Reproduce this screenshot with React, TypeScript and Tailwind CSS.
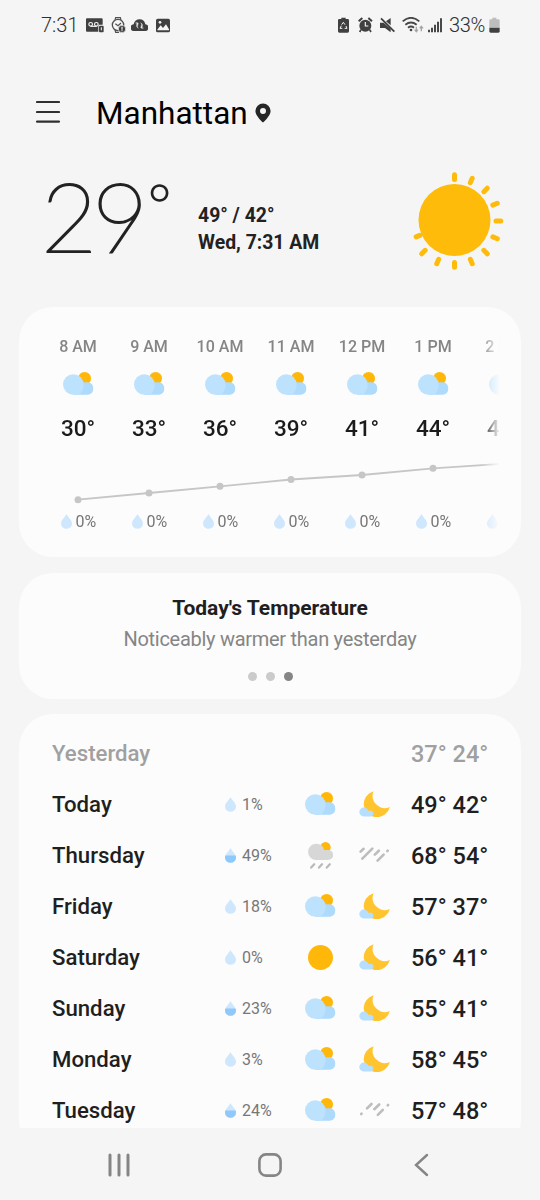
import { ReactNode } from "react";

type DayIcon = "partly" | "rain" | "sun";
type NightIcon = "moon" | "showers" | "drizzle";

interface Hour {
    time: string;
    temp: number;
    y: number;
}

interface Day {
    name: string;
    chance: number;
    day: DayIcon;
    night: NightIcon;
    high: number;
    low: number;
}

// y is the height of the point inside the trend chart
const hours: Hour[] = [
    { time: "8 AM", temp: 30, y: 45.7 },
    { time: "9 AM", temp: 33, y: 39 },
    { time: "10 AM", temp: 36, y: 32.3 },
    { time: "11 AM", temp: 39, y: 25.5 },
    { time: "12 PM", temp: 41, y: 21 },
    { time: "1 PM", temp: 44, y: 14.3 },
    { time: "2 PM", temp: 46, y: 9.7 },
];

const days: Day[] = [
    { name: "Today", chance: 1, day: "partly", night: "moon", high: 49, low: 42 },
    { name: "Thursday", chance: 49, day: "rain", night: "showers", high: 68, low: 54 },
    { name: "Friday", chance: 18, day: "partly", night: "moon", high: 57, low: 37 },
    { name: "Saturday", chance: 0, day: "sun", night: "moon", high: 56, low: 41 },
    { name: "Sunday", chance: 23, day: "partly", night: "moon", high: 55, low: 41 },
    { name: "Monday", chance: 3, day: "partly", night: "moon", high: 58, low: 45 },
    { name: "Tuesday", chance: 24, day: "partly", night: "drizzle", high: 57, low: 48 },
];

const PartlyCloudy = () => (
    <svg className="w-[31px] h-6" viewBox="0 0 31 24">
        <circle cx="21.6" cy="6.4" r="6.4" fill="#ffb80a" />
        <path d="M19 10.2h6a6.4 6.4 0 0 1 0 12.6H10z" fill="#aedafc" />
        <path d="M10.3 2.2a10.3 10.3 0 0 0 0 20.6h5.2c3-1.6 5.1-5.8 5.1-10.3A10.3 10.3 0 0 0 10.3 2.2z" fill="#bde2fe" />
    </svg>
);

const RainyDay = () => (
    <svg className="w-[25px] h-[27px]" viewBox="0 0 25 27">
        <circle cx="17.5" cy="5.2" r="5.2" fill="#ffb80a" />
        <path d="M8.3 1.7a8.2 8.2 0 0 1 7.8 6.2h4a5.1 5.1 0 0 1 0 10.2H8.3a8.2 8.2 0 0 1 0-16.4z" fill="#d7d7d7" />
        <path d="M6.2 22.2l-3 3.4M14 22.2l-3 3.4M21.8 22.2l-3 3.4" stroke="#b9b9b9" strokeWidth="2.2" strokeLinecap="round" />
    </svg>
);

const SunSmall = () => (
    <svg className="w-[25px] h-[25px]" viewBox="0 0 25 25">
        <circle cx="12.5" cy="12.5" r="12.5" fill="#ffb80a" />
    </svg>
);

const Moon = () => (
    <svg className="w-[31px] h-[26px]" viewBox="0 0 31 26">
        <path d="M14.6.2A13.2 13.2 0 1 0 30.8 16 12.2 12.2 0 0 1 14.6.2z" fill="#ffc42e" />
        <path d="M4.7 16.6c2.4 0 4.1 1.4 4.6 3.2h3a2.9 2.9 0 0 1 0 5.6H4.7a4.4 4.4 0 0 1 0-8.8z" fill="#b5deff" />
    </svg>
);

const Showers = () => (
    <svg className="w-[31px] h-4" viewBox="0 0 31 16">
        <path d="M1.6 4.6l3-2.8M3.3 11.6l10-10M15.8 7.6l4-3.9M18.6 13.6l6-6M28.3 4.1l.4-.4" stroke="#bdbdbd" strokeWidth="2.6" strokeLinecap="round" />
    </svg>
);

const Drizzle = () => (
    <svg className="w-[31px] h-4" viewBox="0 0 31 16">
        <path d="M2.2 12l.4-.4M8 6.4l4.5-4.4M15.3 7.2l4.9-4.7M18.8 12.8l5-5M28.7 3.4l.4-.4" stroke="#bdbdbd" strokeWidth="2.6" strokeLinecap="round" />
    </svg>
);

const Drop = ({ half = false }: { half?: boolean }) => (
    <svg className="w-[11px] h-[15px]" viewBox="0 0 11 15">
        <path d="M5.5 0C7 3 11 6.3 11 9.4a5.5 5.3 0 0 1-11 0C0 6.3 4 3 5.5 0z" fill="#cfe7fc" />
        {half && <path d="M.4 7.5h10.2c.3.6.4 1.3.4 1.9a5.5 5.3 0 0 1-11 0c0-.6.1-1.3.4-1.9z" fill="#8fc8fa" />}
    </svg>
);

const dayIcons: Record<DayIcon, ReactNode> = {
    partly: <PartlyCloudy />,
    rain: <RainyDay />,
    sun: <SunSmall />,
};

const nightIcons: Record<NightIcon, ReactNode> = {
    moon: <Moon />,
    showers: <Showers />,
    drizzle: <Drizzle />,
};

const StatusBar = () => (
    <div className="flex h-[50px] items-center pl-[41px] pr-10 text-xl font-light text-[#303030]">
        <span className="w-[45px]">7:31</span>
        <svg className="w-[18px] h-4" viewBox="0 0 54 48" fill="#404040">
            <path d="M3 4h44a3 3 0 0 1 3 3v16h-9a4 4 0 0 0-4 4v17H3a3 3 0 0 1-3-3V7a3 3 0 0 1 3-3z" />
            <path d="M14 28h18" stroke="#f5f5f5" strokeWidth="3.5" />
            <circle cx="14" cy="22" r="5.5" fill="none" stroke="#f5f5f5" strokeWidth="3.5" />
            <circle cx="31" cy="22" r="5.5" fill="none" stroke="#f5f5f5" strokeWidth="3.5" />
            <rect x="39" y="26" width="14" height="20" rx="3" />
            <path d="M46 31v9" stroke="#f5f5f5" strokeWidth="3" />
        </svg>
        <svg className="ml-[7px] w-[15px] h-4" viewBox="0 0 45 48" fill="none" stroke="#505050">
            <path d="M12 9l2-7h14l2 7M12 39l2 7h10" strokeWidth="3.5" />
            <circle cx="21" cy="24" r="17" strokeWidth="4" />
            <path d="M13 20l8 6 9-8" strokeWidth="3.5" />
            <circle cx="33" cy="36" r="11" fill="#404040" stroke="#f5f5f5" strokeWidth="2" />
            <path d="M33 29v9M33 40v3" stroke="#f5f5f5" strokeWidth="3.5" />
        </svg>
        <svg className="ml-[5px] w-[17px] h-4" viewBox="0 0 51 48">
            <path d="M10 42a10 10 0 0 1-2-20C10 12 17 7 26 7s15 5 17 15a10 10 0 0 1-2 20z" fill="#404040" />
            <path d="M22 33a8 8 0 0 1-1-14M20 26v-8h-6M29 18a8 8 0 0 1 1 14M31 25v8h6" fill="none" stroke="#f5f5f5" strokeWidth="3" />
        </svg>
        <svg className="ml-2 w-[14px] h-4" viewBox="0 0 42 48">
            <rect y="5" width="42" height="41" rx="5" fill="#404040" />
            <path d="M4 38l10-13 7 8 9-11 9 15v3H4z" fill="#f5f5f5" />
            <circle cx="12" cy="16" r="4" fill="#f5f5f5" />
        </svg>

        <svg className="ml-auto w-[11px] h-4" viewBox="0 0 33 48">
            <path d="M10 2h13v4h6a4 4 0 0 1 4 4v33a4 4 0 0 1-4 4H4a4 4 0 0 1-4-4V10a4 4 0 0 1 4-4h6z" fill="#404040" />
            <path d="M11 23l5-7 5 7M24 27l3 7h-7M13 34H6l4-8" fill="none" stroke="#f5f5f5" strokeWidth="3" />
        </svg>
        <svg className="ml-[9px] w-[15px] h-4" viewBox="0 0 45 48">
            <circle cx="22" cy="26" r="18" fill="#404040" />
            <path d="M2 13L13 3M42 13L31 3" stroke="#404040" strokeWidth="6" />
            <path d="M9 38l-4 7M35 38l4 7" stroke="#404040" strokeWidth="5" />
            <path d="M22 15v12h9" fill="none" stroke="#f5f5f5" strokeWidth="3.5" />
        </svg>
        <svg className="ml-[7px] w-[15px] h-4" viewBox="0 0 45 48">
            <path d="M0 17h11l21 19v10L15 33H0zM18 13l14-10v22z" fill="#404040" />
            <path d="M3 4l40 40" stroke="#404040" strokeWidth="5.5" />
        </svg>
        <svg className="ml-[7px] w-[22px] h-4" viewBox="0 0 66 48" fill="none">
            <path d="M2 13q25-21 50 0M10 23q17-13 34 0M18 32q9-7 18 0" stroke="#484848" strokeWidth="5.5" />
            <circle cx="27" cy="39" r="4" fill="#404040" />
            <path d="M43 29v14M38 38l5 6 5-6M58 43V29M53 34l5-6 5 6" stroke="#a5a5a5" strokeWidth="4" />
        </svg>
        <svg className="ml-1 w-[15px] h-4" viewBox="0 0 45 48">
            <path d="M3 38v8M12 32v14M21 23v23M30 14v32M39 4v42" stroke="#484848" strokeWidth="6" />
        </svg>
        <span className="ml-1.5 w-[40px] tracking-[-0.3px]">33%</span>
        <svg className="w-[11px] h-4" viewBox="0 0 33 48">
            <path d="M10 2h12v5h6a4 4 0 0 1 4 4v21H1V11a4 4 0 0 1 4-4h5z" fill="#bdbdbd" />
            <path d="M1 32h31v11a4 4 0 0 1-4 4H5a4 4 0 0 1-4-4z" fill="#404040" />
        </svg>
    </div>
);

// Twelve rays, the upper left part of the circle has none
const rays = [0, 22.5, 45, 67.5, 90, 112.5, 135, 157.5, 180, 202.5, 225, 247.5];

const BigSun = () => (
    <svg className="w-[108px] h-[108px]" viewBox="0 0 108 108">
        <circle cx="54.5" cy="54" r="36" fill="#ffbb0a" />
        {rays.map((angle) => (
            <path
                key={angle}
                d={angle === 247.5 ? "M54.5 17.5v-4" : "M54.5 13.5v-4.8"}
                transform={`rotate(${angle} 54.5 55)`}
                stroke="#ffbb0a"
                strokeWidth="5"
                strokeLinecap="round"
            />
        ))}
    </svg>
);

const HourlyCard = () => {
    const points = hours.map((hour, i) => `${35 + i * 71},${hour.y}`).join(" ");

    return (
        <section className="mx-[19px] h-[250px] rounded-[34px] bg-[#fcfcfc] pl-[23.5px] pt-[26px]">
            <div className="w-[458px] overflow-hidden [mask-image:linear-gradient(to_right,black_438px,transparent_457px)]">
                <div className="flex w-[497px]">
                    {hours.map((hour) => (
                        <div key={hour.time} className="flex w-[71px] flex-col items-center">
                            <span className="h-[26px] pt-px text-base font-medium leading-[26px] text-[#858585]">{hour.time}</span>
                            <div className="mt-[13px]"><PartlyCloudy /></div>
                            <span className="mt-4 h-[33px] text-[22.5px] font-medium leading-8 text-[#1b1b1b]">{hour.temp}°</span>
                        </div>
                    ))}
                </div>
                <svg className="mt-[9px] h-[52px] w-[497px]" viewBox="0 0 497 52">
                    <polyline points={points} fill="none" stroke="#c6c6c6" strokeWidth="1.8" />
                    {hours.map((hour, i) => (
                        <circle key={hour.time} cx={35 + i * 71} cy={hour.y} r="3.5" fill="#c6c6c6" />
                    ))}
                </svg>
                <div className="mt-[3px] flex w-[497px]">
                    {hours.map((hour) => (
                        <div key={hour.time} className="flex h-6 w-[71px] items-center gap-1 pl-[18px] text-base text-[#777]">
                            <Drop />
                            <span className="pt-0.5">0%</span>
                        </div>
                    ))}
                </div>
            </div>
        </section>
    );
};

const DailyRow = ({ item }: { item: Day }) => (
    <div className="flex h-[51px] items-center">
        <span className="w-[172.5px] pt-0.5 text-[22.2px] font-medium text-[#1f1f1f]">{item.name}</span>
        <Drop half={item.chance > 20} />
        <span className="ml-[6.5px] w-[63px] pt-0.5 text-base text-[#777]">{item.chance}%</span>
        <div className="flex w-[31px] justify-center">{dayIcons[item.day]}</div>
        <div className="ml-[23px] flex w-[31px] justify-center">{nightIcons[item.night]}</div>
        <span className="ml-[21px] whitespace-nowrap pt-[3px] text-[23.5px] font-medium text-[#1f1f1f]">{item.high}° {item.low}°</span>
    </div>
);

const App = () => (
    <div className="flex h-[1200px] w-[540px] flex-col overflow-hidden bg-[#f5f5f5] font-['Roboto',sans-serif]">
        <StatusBar />

        <header className="flex h-[126px] items-center pl-9">
            <svg className="-mt-0.5 w-6 h-6" viewBox="0 0 24 24">
                <path d="M1 2h22M1 12h22M1 21.6h22" stroke="#303030" strokeWidth="2.1" strokeLinecap="round" />
            </svg>
            <h1 className="ml-9 pt-0.5 text-[31.5px] text-black">Manhattan</h1>
            <svg className="ml-[7.5px] w-4 h-5" viewBox="0 0 16 20">
                <path fillRule="evenodd" d="M8 .5A7.6 7.6 0 0 0 .4 8C.4 13 8 19.5 8 19.5S15.6 13 15.6 8A7.6 7.6 0 0 0 8 .5zM8 5a3 3 0 1 1 0 6 3 3 0 0 1 0-6z" fill="#262626" />
            </svg>
        </header>

        <div className="-mt-2.5 flex h-[141px] pl-[41px] pr-[32px]">
            <div className="flex w-[157px] items-start font-['Lato',sans-serif] font-thin text-[#222] [-webkit-text-stroke:2px_#222]">
                <span className="text-[97px] leading-[97px] tracking-[-5.3px]">29</span>
                <span className="ml-[5px] text-[56px] leading-[75px]">°</span>
            </div>
            <div className="pt-9 text-[19.4px] font-bold leading-[27px] text-[#222]">
                <p>49° / 42°</p>
                <p>Wed, 7:31 AM</p>
            </div>
            <div className="ml-auto"><BigSun /></div>
        </div>

        <HourlyCard />

        <section className="mx-[19px] mt-[15.5px] flex h-[126px] flex-col items-center rounded-[34px] bg-[#fcfcfc] pt-5">
            <h2 className="text-[21px] font-bold leading-[31px] text-[#1f1f1f]">Today's Temperature</h2>
            <p className="text-xl leading-[31px] tracking-[-0.28px] text-[#858585]">Noticeably warmer than yesterday</p>
            <div className="mt-[17px] flex gap-[9px]">
                <span className="size-[9px] rounded-full bg-[#cbcbcb]" />
                <span className="size-[9px] rounded-full bg-[#cbcbcb]" />
                <span className="size-[9px] rounded-full bg-[#858585]" />
            </div>
        </section>

        <div className="mt-[15px] h-[414.5px] overflow-hidden px-[19px]">
            <section className="h-[440px] rounded-[34px] bg-[#fcfcfc] pl-[33px] pt-3.5">
                <div className="flex h-[51px] items-center font-medium text-[#a0a0a0]">
                    <span className="w-[359px] pt-0.5 text-[22.2px]">Yesterday</span>
                    <span className="pt-[3px] text-[23.5px]">37° 24°</span>
                </div>
                {days.map((item) => <DailyRow key={item.name} item={item} />)}
            </section>
        </div>

        <nav className="flex flex-1 items-center pl-[107px] pt-0.5">
            <svg className="w-6 h-6" viewBox="0 0 24 24">
                <path d="M3 2v20M12 2v20M21 2v20" stroke="#858585" strokeWidth="3" strokeLinecap="round" />
            </svg>
            <svg className="ml-[127px] w-6 h-6" viewBox="0 0 24 24">
                <rect x="1.4" y="1.4" width="21.2" height="21.2" rx="6.5" fill="none" stroke="#858585" strokeWidth="2.6" />
            </svg>
            <svg className="ml-[127px] w-6 h-6" viewBox="0 0 24 24">
                <path d="M18 2L7 12l11 10" fill="none" stroke="#858585" strokeWidth="2.4" strokeLinecap="round" />
            </svg>
        </nav>
    </div>
);

export default App;
